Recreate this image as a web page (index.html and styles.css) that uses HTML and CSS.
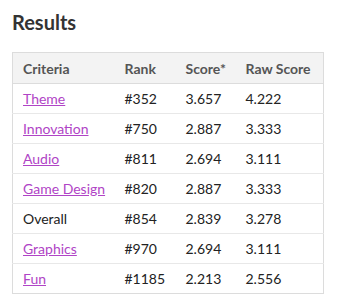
FILE: index.html
```html
<!DOCTYPE html>
<html>
<head>
<meta charset="utf-8">
<link rel="stylesheet" href="styles.css">
</head>
<body>
<div class="panel">
  <h2 class="title">Results</h2>
  <table class="results">
    <colgroup><col class="c1"><col class="c2"><col class="c3"><col class="c4"></colgroup>
    <thead>
      <tr><th>Criteria</th><th>Rank</th><th>Score*</th><th>Raw Score</th></tr>
    </thead>
    <tbody>
      <tr><td><a href="#">Theme</a></td><td>#352</td><td>3.657</td><td>4.222</td></tr>
      <tr><td><a href="#">Innovation</a></td><td>#750</td><td>2.887</td><td>3.333</td></tr>
      <tr><td><a href="#">Audio</a></td><td>#811</td><td>2.694</td><td>3.111</td></tr>
      <tr><td><a href="#">Game Design</a></td><td>#820</td><td>2.887</td><td>3.333</td></tr>
      <tr><td>Overall</td><td>#854</td><td>2.839</td><td>3.278</td></tr>
      <tr><td><a href="#">Graphics</a></td><td>#970</td><td>2.694</td><td>3.111</td></tr>
      <tr><td><a href="#">Fun</a></td><td>#1185</td><td>2.213</td><td>2.556</td></tr>
    </tbody>
  </table>
</div>
</body>
</html>
```
FILE: styles.css
```css
html, body {
  margin: 0;
  padding: 0;
  background: #fff;
}
body {
  font-family: Lato, "Liberation Sans", sans-serif;
  color: #222;
}
.panel {
  padding: 10px 12px;
}
.title {
  margin: 0 0 18px 0;
  font-size: 20px;
  font-weight: 700;
  color: #333;
  line-height: 24px;
}
.results {
  border-collapse: collapse;
  table-layout: fixed;
  width: 312px;
  font-size: 14px;
  border: 1px solid #dcdcdc;
}
.results th {
  background: #f3f3f3;
  color: #555;
  font-weight: 700;
  text-align: left;
  height: 30px;
  padding: 0 10px;
  border-bottom: 1px solid #dcdcdc;
  white-space: nowrap;
}
.results td {
  height: 29px;
  padding: 0 10px;
  border-top: 1px solid #e8e8e8;
  white-space: nowrap;
}
.results tbody tr:first-child td {
  border-top: none;
}
.results a {
  color: #b044c6;
  text-decoration: underline;
}
.c1 { width: 102px; }
.c2 { width: 61px; }
.c3 { width: 60px; }
```
